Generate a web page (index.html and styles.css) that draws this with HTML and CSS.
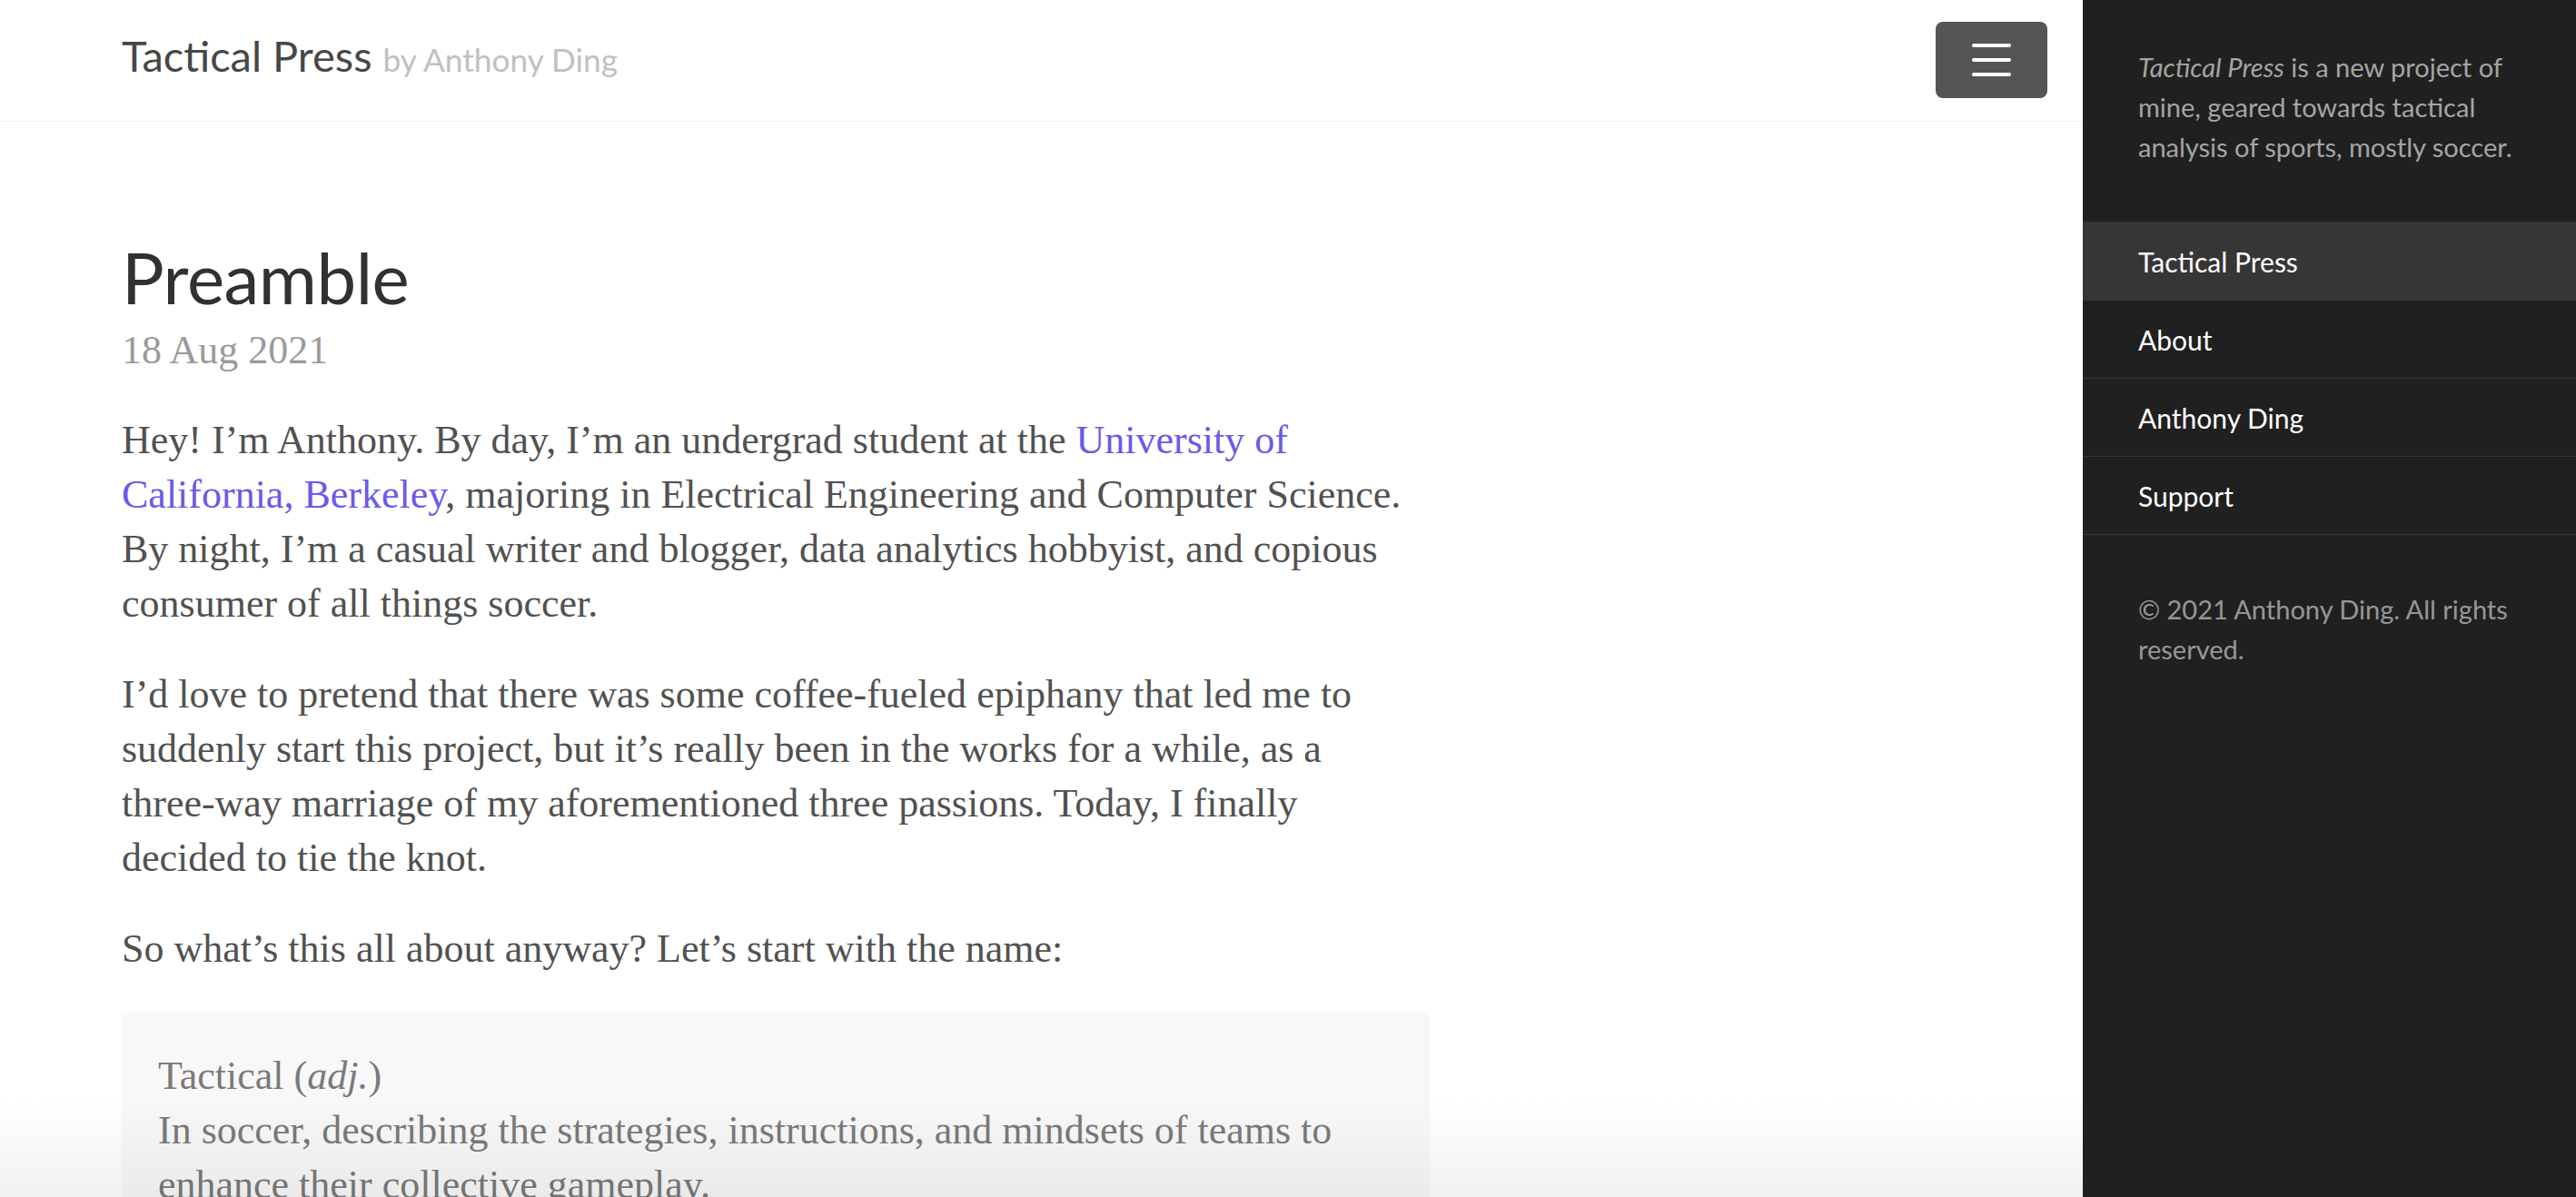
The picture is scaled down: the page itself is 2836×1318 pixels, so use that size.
FILE: index.html
```html
<!DOCTYPE html>
<html lang="en">
<head>
<meta charset="utf-8">
<title>Preamble · Tactical Press</title>
<link rel="stylesheet" href="styles.css">
</head>
<body>
<div class="wrap">
  <div class="main">
    <header class="masthead">
      <h3 class="masthead-title">
        <a href="#" class="masthead-link">Tactical Press</a>
        <small>by Anthony Ding</small>
      </h3>
      <button class="sidebar-toggle" type="button" aria-label="Toggle sidebar">
        <svg class="toggle-icon" width="43" height="36" viewBox="0 0 43 36">
          <line x1="2" y1="2" x2="41" y2="2"/>
          <line x1="2" y1="18" x2="41" y2="18"/>
          <line x1="2" y1="34" x2="41" y2="34"/>
        </svg>
      </button>
    </header>

    <div class="container">
      <article class="post">
        <h1 class="post-title">Preamble</h1>
        <span class="post-date">18 Aug 2021</span>

        <p>Hey! I’m Anthony. By day, I’m an undergrad student at the <a href="#">University of California, Berkeley</a>, majoring in Electrical Engineering and Computer Science. By night, I’m a casual writer and blogger, data analytics hobbyist, and copious consumer of all things soccer.</p>

        <p>I’d love to pretend that there was some <span class="nowrap">coffee-fueled</span> epiphany that led me to suddenly start this project, but it’s really been in the works for a while, as a <span class="nowrap">three-way</span> marriage of my aforementioned three passions. Today, I finally decided to tie the knot.</p>

        <p>So what’s this all about anyway? Let’s start with the name:</p>

        <blockquote class="definition">
          <p>Tactical (<em>adj.</em>)<br>In soccer, describing the strategies, instructions, and mindsets of teams to enhance their collective gameplay.</p>
        </blockquote>
      </article>
    </div>
    <div class="fade"></div>
  </div>

  <aside class="sidebar">
    <div class="sidebar-item sidebar-intro">
      <p><em>Tactical Press</em> is a new project of mine, geared towards tactical analysis of sports, mostly soccer.</p>
    </div>
    <nav class="sidebar-nav">
      <a class="sidebar-nav-item active" href="#">Tactical Press</a>
      <a class="sidebar-nav-item" href="#">About</a>
      <a class="sidebar-nav-item" href="#">Anthony Ding</a>
      <a class="sidebar-nav-item" href="#">Support</a>
    </nav>
    <div class="sidebar-item sidebar-copy">
      <p>© 2021 Anthony Ding. All rights reserved.</p>
    </div>
  </aside>
</div>
</body>
</html>
```

FILE: styles.css
```css
* { box-sizing: border-box; }

html, body {
  margin: 0;
  padding: 0;
  height: 100%;
}

body {
  background: #fff;
  color: #515151;
  font-family: "Liberation Serif", "Times New Roman", serif;
  font-size: 44px;
  line-height: 60px;
  overflow: hidden;
}

.wrap {
  display: flex;
  height: 1318px;
}

.main {
  position: relative;
  flex: 1;
  min-width: 0;
  overflow: hidden;
}

/* Masthead */
.masthead {
  display: flex;
  align-items: center;
  justify-content: space-between;
  height: 134px;
  padding: 0 39px 0 134px;
  border-bottom: 1px solid #eeeeee;
}

.masthead-title {
  margin: -6px 0 0;
  font-family: Lato, "Open Sans", sans-serif;
  font-weight: 400;
  font-size: 47px;
  line-height: 62px;
  color: #474747;
}

.masthead-link {
  color: #474747;
  text-decoration: none;
}

.masthead-title small {
  font-size: 75%;
  color: #c0c0c0;
  font-weight: 400;
}

.sidebar-toggle {
  width: 123px;
  height: 84px;
  margin-top: -1px;
  border: 0;
  border-radius: 8px;
  background: #555555;
  padding: 0;
  display: flex;
  align-items: center;
  justify-content: center;
}

.toggle-icon line {
  stroke: #ffffff;
  stroke-width: 4;
  stroke-linecap: round;
}

/* Content */
.container {
  padding: 121px 0 0 134px;
  width: 1574px;
}

.post-title {
  margin: 0;
  font-family: Lato, "Open Sans", sans-serif;
  font-weight: 400;
  font-size: 78px;
  line-height: 100px;
  color: #313131;
  letter-spacing: -0.5px;
}

.post-date {
  display: block;
  margin-top: 1px;
  margin-bottom: 39px;
  color: #9a9a9a;
}

.post p {
  margin: 0 0 40px;
  max-width: 1418px;
}

.nowrap {
  white-space: nowrap;
}

.post a {
  color: #6a5ae6;
  text-decoration: none;
}

.definition {
  margin: 0;
  padding: 40px 40px 40px;
  background: #f8f8f8;
  color: #7a7a7a;
}

.definition p {
  margin: 0;
}

.fade {
  position: absolute;
  left: 0;
  right: 0;
  bottom: 0;
  height: 110px;
  background: linear-gradient(to bottom, rgba(0, 0, 0, 0), rgba(0, 0, 0, 0.055));
  pointer-events: none;
}

/* Sidebar */
.sidebar {
  flex: 0 0 543px;
  width: 543px;
  background: #202020;
  color: rgba(255, 255, 255, 0.6);
  font-family: Lato, "Open Sans", sans-serif;
  font-size: 29px;
  line-height: 44px;
}

.sidebar-item {
  padding: 0 40px 0 61px;
}

.sidebar-item p {
  margin: 0;
}

.sidebar-intro {
  padding-top: 52px;
  margin-bottom: 60px;
}

.sidebar-nav {
  display: flex;
  flex-direction: column;
  border-bottom: 1px solid rgba(255, 255, 255, 0.1);
}

.sidebar-nav-item {
  display: block;
  padding: 21px 40px 20px 61px;
  border-top: 1px solid rgba(255, 255, 255, 0.1);
  color: #ffffff;
  text-decoration: none;
  font-size: 30px;
}

.sidebar-nav-item.active {
  background: rgba(255, 255, 255, 0.1);
  border-top-color: transparent;
}

.sidebar-copy {
  margin-top: 60px;
  color: rgba(255, 255, 255, 0.55);
}
```
